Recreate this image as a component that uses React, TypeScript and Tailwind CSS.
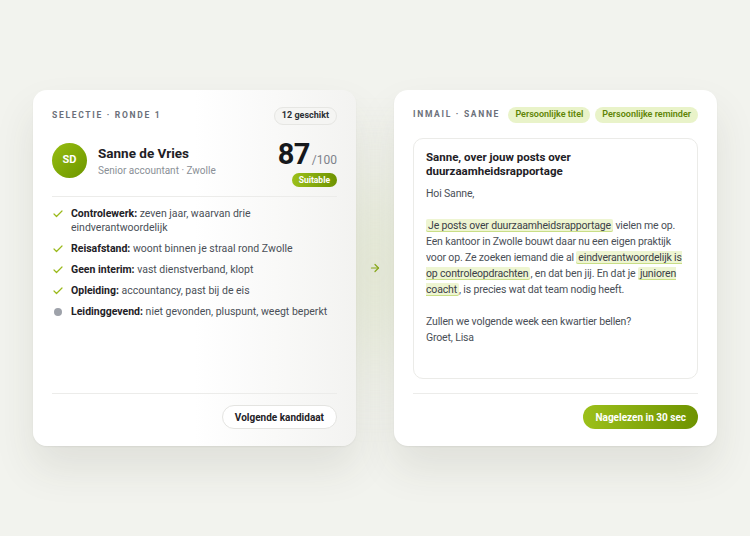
import React from "react";
import { ArrowRight, Check } from "lucide-react";

const criteria = [
  { ok: true, label: "Controlewerk:", text: "zeven jaar, waarvan drie eindverantwoordelijk" },
  { ok: true, label: "Reisafstand:", text: "woont binnen je straal rond Zwolle" },
  { ok: true, label: "Geen interim:", text: "vast dienstverband, klopt" },
  { ok: true, label: "Opleiding:", text: "accountancy, past bij de eis" },
  { ok: false, label: "Leidinggevend:", text: "niet gevonden, pluspunt, weegt beperkt" },
];

function Mark({ children }: { children: React.ReactNode }) {
  return (
    <span className="rounded-[2px] bg-[#eef5d2] px-[2px] shadow-[inset_0_-1px_0_#c9de86] text-[#3b4048]">
      {children}
    </span>
  );
}

function Footer({ children }: { children: React.ReactNode }) {
  return (
    <div className="mt-auto flex justify-end border-t border-[#ececea] pt-[11px]">{children}</div>
  );
}

export default function App() {
  return (
    <div
      className="relative flex h-[536px] w-[750px] items-center justify-center gap-[38px] overflow-hidden bg-[#f2f3ee] text-[#4a4f57]"
      style={{ fontFamily: 'Roboto, "Liberation Sans", sans-serif' }}
    >
      <div className="pointer-events-none absolute left-[300px] top-[180px] h-[180px] w-[150px] rounded-full bg-[#e3e9cf] opacity-60 blur-[40px]" />

      {/* selectie */}
      <div className="relative flex h-[356px] w-[323px] flex-col rounded-[14px] bg-gradient-to-r from-white via-white to-[#f3f3f1] px-[19px] pb-[17px] pt-[17px] shadow-[0_22px_40px_rgba(60,60,40,0.10),0_1px_2px_rgba(0,0,0,0.06)]">
        <div className="flex items-center justify-between whitespace-nowrap">
          <span className="text-[8.5px] font-bold uppercase tracking-[0.2em] text-[#6b707a]">Selectie · Ronde 1</span>
          <span className="rounded-full border border-[#e6e6e3] bg-[#f5f5f3] px-[7px] py-[1px] text-[9px] font-bold text-[#2b2f35]">12 geschikt</span>
        </div>

        <div className="mt-[17px] flex items-start">
          <div className="mt-[1px] flex h-[35px] w-[35px] shrink-0 items-center justify-center rounded-full bg-gradient-to-br from-[#96bd10] to-[#6d9600] text-[11px] font-bold text-white">
            SD
          </div>
          <div className="ml-[11px] mt-[2px] flex-1">
            <div className="text-[13.5px] font-bold leading-[18px] text-[#1e2126]">Sanne de Vries</div>
            <div className="mt-[1px] text-[10px] text-[#8a8f96]">Senior accountant · Zwolle</div>
          </div>
          <div className="-mt-[2px] flex flex-col items-end">
            <div className="flex items-baseline leading-none">
              <span className="text-[29px] font-bold tracking-[-0.02em] text-[#16181c]">87</span>
              <span className="ml-[2px] text-[12px] text-[#7d828a]">/100</span>
            </div>
            <span className="mt-[4px] rounded-full bg-gradient-to-r from-[#9cc01a] to-[#6e9300] px-[7px] py-[1px] text-[8.5px] font-bold text-white">Suitable</span>
          </div>
        </div>

        <div className="mt-[9px] border-t border-[#ececea]" />

        <ul className="mt-[10px] flex flex-col gap-[7px]">
          {criteria.map((c) => (
            <li key={c.label} className="flex items-start text-[10.5px] leading-[14px]">
              <span className="flex h-[14px] w-[19px] shrink-0 items-center">
                {c.ok ? (
                  <Check size={12} strokeWidth={2.4} className="text-[#9ab91a]" />
                ) : (
                  <span className="ml-[2px] h-[8px] w-[8px] rounded-full bg-[#9ea2aa]" />
                )}
              </span>
              <span className={c.label === "Controlewerk:" ? "max-w-[190px]" : ""}>
                <b className="font-bold text-[#1e2126]">{c.label}</b> {c.text}
              </span>
            </li>
          ))}
        </ul>

        <Footer>
          <button className="h-[24px] rounded-full border border-[#e4e4e1] bg-white px-[12px] text-[10px] font-bold text-[#1e2126]">
            Volgende kandidaat
          </button>
        </Footer>
      </div>

      <ArrowRight size={12} strokeWidth={2.4} className="absolute left-[369px] top-[262px] text-[#88a91a]" />

      {/* inmail */}
      <div className="relative flex h-[356px] w-[323px] flex-col rounded-[14px] bg-white px-[19px] pb-[17px] pt-[17px] shadow-[0_22px_40px_rgba(60,60,40,0.10),0_1px_2px_rgba(0,0,0,0.06)]">
        <div className="flex items-center whitespace-nowrap">
          <span className="text-[8.5px] font-bold uppercase tracking-[0.2em] text-[#6b707a]">Inmail · Sanne</span>
          <span className="ml-auto rounded-full bg-[#e9f3c9] px-[7px] py-[1px] text-[9px] font-semibold text-[#5f8506]">Persoonlijke titel</span>
          <span className="ml-[5px] rounded-full bg-[#e9f3c9] px-[7px] py-[1px] text-[9px] font-semibold text-[#5f8506]">Persoonlijke reminder</span>
        </div>

        <div className="mt-[15px] h-[241px] rounded-[10px] border border-[#ebebe8] px-[12px] pt-[11px] text-[10.5px] leading-[16px] tracking-[-0.015em] text-[#4a4f57]">
          <div className="max-w-[160px] text-[11.5px] font-bold leading-[14px] tracking-normal text-[#1e2126]">
            Sanne, over jouw posts over duurzaamheidsrapportage
          </div>
          <p className="mt-[8px]">Hoi Sanne,</p>
          <p className="mt-[16px]">
            <Mark>Je posts over duurzaamheidsrapportage</Mark> vielen me op. Een kantoor in Zwolle bouwt daar nu een eigen praktijk voor op. Ze zoeken iemand die al <Mark>eindverantwoordelijk is op controleopdrachten</Mark>, en dat ben jij. En dat je <Mark>junioren coacht</Mark>, is precies wat dat team nodig heeft.
          </p>
          <p className="mt-[16px]">
            Zullen we volgende week een kwartier bellen?
            <br />
            Groet, Lisa
          </p>
        </div>

        <Footer>
          <button className="h-[24px] rounded-full bg-gradient-to-r from-[#9cc01a] to-[#6e9300] px-[12px] text-[10px] font-bold text-white">
            Nagelezen in 30 sec
          </button>
        </Footer>
      </div>
    </div>
  );
}
